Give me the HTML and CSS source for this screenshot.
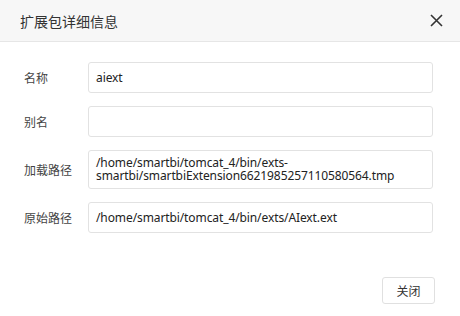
FILE: index.html
```html
<!DOCTYPE html>
<html lang="zh-CN">
<head>
    <meta charset="UTF-8">
    <title>扩展包详细信息</title>
    <link rel="stylesheet" href="styles.css">
</head>
<body>
    <div class="dialog">
        <div class="dialog-header">
            <span class="dialog-title">扩展包详细信息</span>
            <svg class="close-icon" width="13" height="13" viewBox="0 0 13 13">
                <path d="M1 1 L12 12 M12 1 L1 12" stroke="#333" stroke-width="1.6" fill="none"/>
            </svg>
        </div>
        <div class="dialog-body">
            <div class="form-row">
                <label>名称</label>
                <div class="field">aiext</div>
            </div>
            <div class="form-row">
                <label>别名</label>
                <div class="field"></div>
            </div>
            <div class="form-row">
                <label>加载路径</label>
                <div class="field multi">/home/smartbi/tomcat_4/bin/exts-<br>smartbi/smartbiExtension6621985257110580564.tmp</div>
            </div>
            <div class="form-row">
                <label>原始路径</label>
                <div class="field">/home/smartbi/tomcat_4/bin/exts/AIext.ext</div>
            </div>
        </div>
        <div class="dialog-footer">
            <button class="btn">关闭</button>
        </div>
    </div>
</body>
</html>
```

FILE: styles.css
```css
body {
    margin: 0;
    font-family: "Noto Sans", "Noto Sans CJK SC", sans-serif;
    color: #333;
    background: #fff;
}
.dialog {
    width: 460px;
    height: 316px;
    display: flex;
    flex-direction: column;
}
.dialog-header {
    height: 41px;
    background-color: #f7f7f7;
    border-bottom: 1px solid #e6e6e6;
    display: flex;
    align-items: center;
    justify-content: space-between;
    padding: 0 17px 0 20px;
}
.dialog-title {
    font-family: "Noto Sans CJK SC", sans-serif;
    font-size: 14px;
    color: #333;
}
.dialog-body {
    padding: 20px 27px 0 0;
    display: flex;
    flex-direction: column;
    gap: 13px;
}
.form-row {
    display: flex;
    align-items: center;
}
.form-row label {
    width: 64px;
    padding-left: 24px;
    font-family: "Noto Sans CJK SC", sans-serif;
    font-size: 12px;
    color: #444;
}
.field {
    flex: 1;
    height: 29px;
    border: 1px solid #e2e2e2;
    border-radius: 3px;
    padding: 0 7px;
    font-size: 12px;
    letter-spacing: -0.1px;
    line-height: 29px;
    color: #222;
    white-space: nowrap;
    box-sizing: content-box;
}
.field.multi {
    height: 26px;
    line-height: 13px;
    padding-top: 5px;
    padding-bottom: 6px;
}
.dialog-footer {
    margin-top: auto;
    display: flex;
    justify-content: flex-end;
    padding: 0 25px 12px 0;
}
.btn {
    width: 53px;
    height: 27px;
    background: #fff;
    border: 1px solid #e0e0e0;
    border-radius: 3px;
    font-family: "Noto Sans CJK SC", sans-serif;
    font-size: 12px;
    color: #333;
    padding: 0;
}
```
